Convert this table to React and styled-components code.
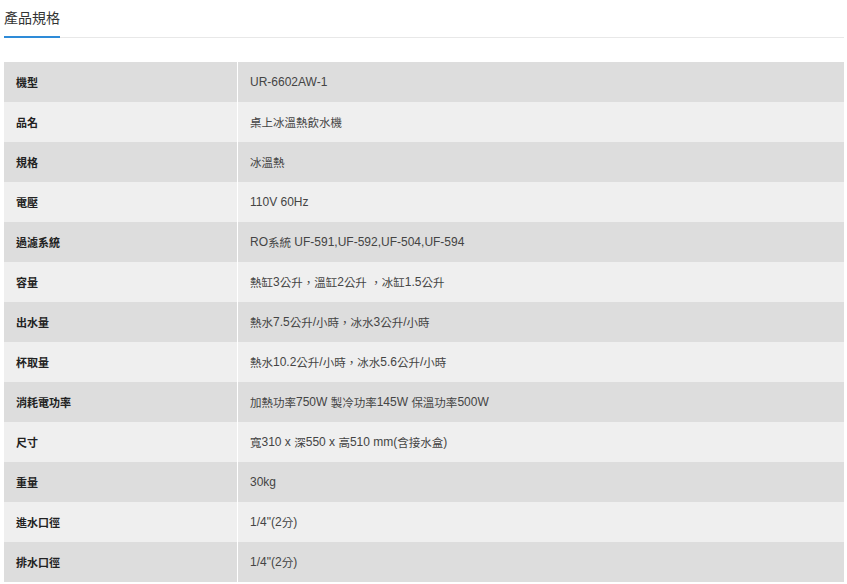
import React from "react";
import styled, { createGlobalStyle } from "styled-components";

const Global = createGlobalStyle`
  html, body { margin: 0; padding: 0; background: #fff; }
  body { font-family: "Liberation Sans", Arial, "Noto Sans CJK TC", sans-serif; }
`;

const Page = styled.div`
  width: 840px;
  margin-left: 4px;
`;

const TabBar = styled.div`
  display: flex;
  border-bottom: 1px solid #e8e8e8;
  height: 37px;
`;

const Tab = styled.div`
  font-size: 14px;
  color: #333;
  line-height: 37px;
  border-bottom: 2px solid #2e8bd8;
  margin-bottom: -1px;
  font-family: "Liberation Sans", "Noto Sans CJK TC", sans-serif;
`;

const Table = styled.div`
  margin-top: 24px;
  display: grid;
  grid-template-columns: 233px 1px 1fr;
`;

const Row = styled.div`
  display: contents;
`;

const Cell = styled.div`
  height: 40px;
  display: flex;
  align-items: center;
  padding-left: 12px;
  font-size: 12px;
  white-space: pre;
  background: ${(p) => (p.$odd ? "#dddddd" : "#efefef")};
  color: ${(p) => (p.$label ? "#222" : "#444")};
  font-weight: ${(p) => (p.$label ? 700 : 400)};
  font-family: "Liberation Sans", Arial, "Noto Sans CJK TC", sans-serif;
`;

const Han = styled.span`
  font-size: ${(p) => p.$size}px;
  font-family: "Noto Sans CJK TC", sans-serif;
`;

const Divider = styled.div`
  background: #fff;
`;

const rows = [
  ["機型", "UR-6602AW-1"],
  ["品名", "桌上冰溫熱飲水機"],
  ["規格", "冰溫熱"],
  ["電壓", "110V 60Hz"],
  ["過濾系統", "RO系統 UF-591,UF-592,UF-504,UF-594"],
  ["容量", "熱缸3公升，溫缸2公升 ，冰缸1.5公升"],
  ["出水量", "熱水7.5公升/小時，冰水3公升/小時"],
  ["杯取量", "熱水10.2公升/小時，冰水5.6公升/小時"],
  ["消耗電功率", "加熱功率750W 製冷功率145W 保溫功率500W"],
  ["尺寸", "寬310 x 深550 x 高510 mm(含接水盒)"],
  ["重量", "30kg"],
  ["進水口徑", "1/4\"(2分)"],
  ["排水口徑", "1/4\"(2分)"],
];

const HAN = /([\u3000-\u9fff\uff00-\uffef]+)/;

function Mixed({ text, size }) {
  return text
    .split(HAN)
    .filter((s) => s.length)
    .map((s, i) =>
      HAN.test(s) ? (
        <Han key={i} $size={size}>{s}</Han>
      ) : (
        <span key={i}>{s}</span>
      )
    );
}

export default function App() {
  return (
    <>
      <Global />
      <Page>
        <TabBar>
          <Tab>產品規格</Tab>
        </TabBar>
        <Table>
          {rows.map(([k, v], i) => (
            <Row key={k}>
              <Cell $label $odd={i % 2 === 0}>
                <Mixed text={k} size={11} />
              </Cell>
              <Divider />
              <Cell $odd={i % 2 === 0}>
                <Mixed text={v} size={11.5} />
              </Cell>
            </Row>
          ))}
        </Table>
      </Page>
    </>
  );
}
